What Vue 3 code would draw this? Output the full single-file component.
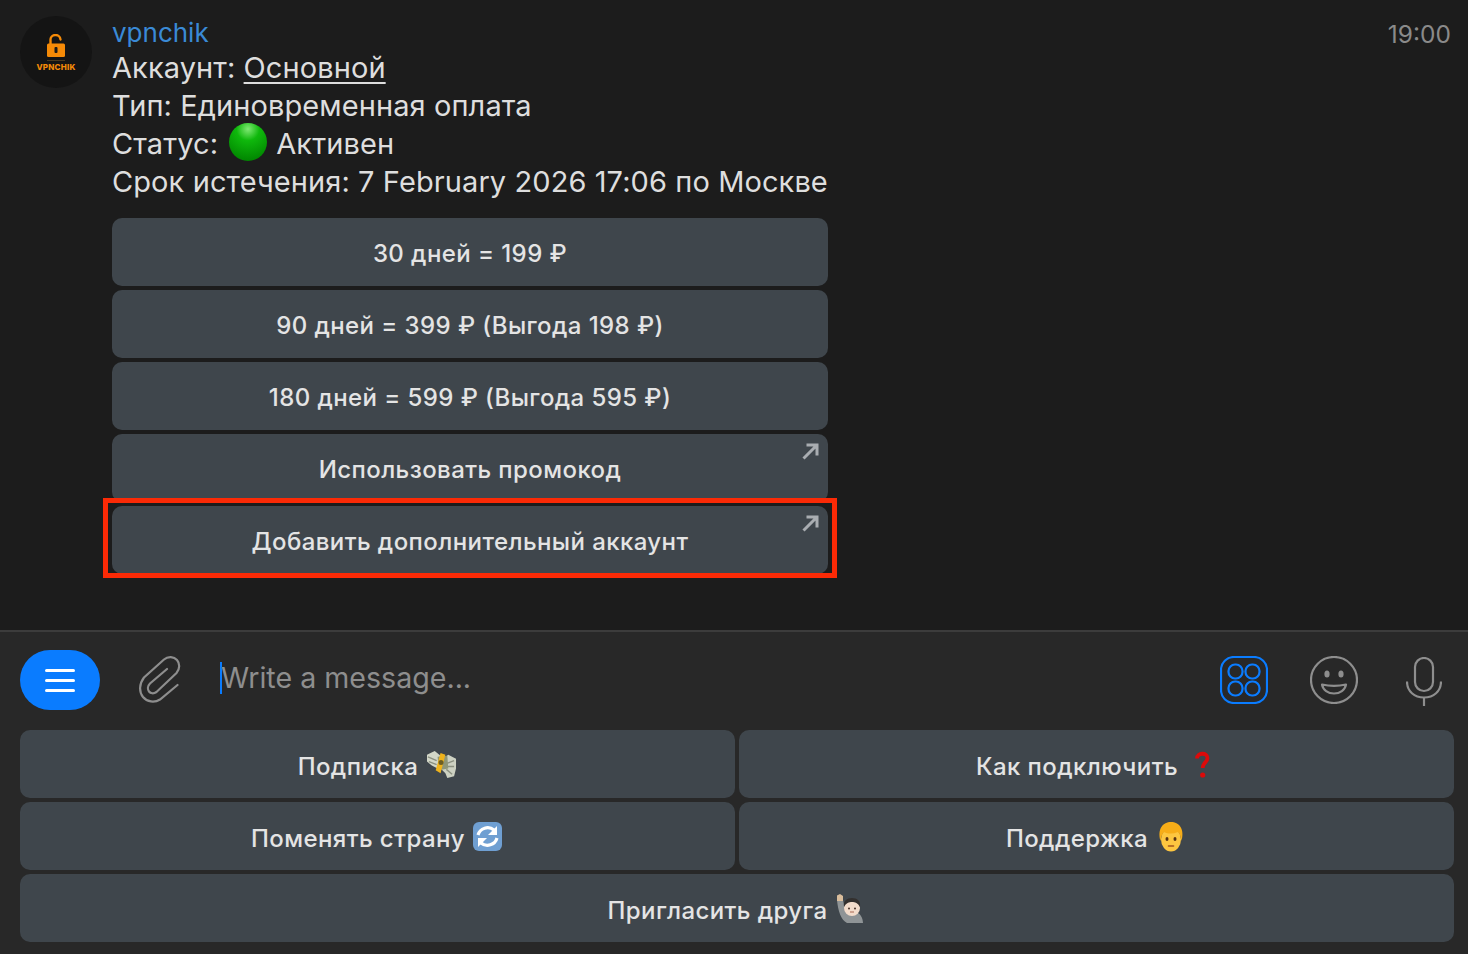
<script setup>
const payButtons = [
  { text: '30 дней = 199 ₽' },
  { text: '90 дней = 399 ₽ (Выгода 198 ₽)' },
  { text: '180 дней = 599 ₽ (Выгода 595 ₽)' },
  { text: 'Использовать промокод', link: true },
  { text: 'Добавить дополнительный аккаунт', link: true, marked: true },
]
</script>

<template>
  <div class="app">
    <section class="chat">
      <div class="avatar">
        <svg width="24" height="26" viewBox="0 0 24 26" class="lock">
          <path d="M6.500 11V6.500a5 5 0 0 1 10 -1" fill="none" stroke="#f58a07" stroke-width="2.400" stroke-linecap="round"/>
          <rect x="3" y="9.500" width="18" height="13.500" rx="1.500" fill="#f58a07"/>
          <rect x="10.500" y="13" width="3" height="6" rx="1" fill="#1a1a1a"/>
        </svg>
        <span class="since"></span>
        <span class="brand">VPNCHIK</span>
      </div>
      <div class="message">
        <div class="name">vpnchik</div>
        <div class="line">Аккаунт: <span class="under">Основной</span></div>
        <div class="line">Тип: Единовременная оплата</div>
        <div class="line status">Статус:
          <svg class="dot" width="38" height="38" viewBox="0 0 38 38">
            <defs>
              <radialGradient id="gd" cx="50%" cy="16%" r="84%">
                <stop offset="0" stop-color="#7fe873"/>
                <stop offset=".36" stop-color="#0fb80c"/>
                <stop offset="1" stop-color="#008500"/>
              </radialGradient>
            </defs>
            <circle cx="19" cy="19" r="19" fill="url(#gd)"/>
          </svg>
          Активен</div>
        <div class="line">Срок истечения: 7 February 2026 17:06 по Москве</div>
        <div class="inline-kb">
          <div v-for="b in payButtons" :key="b.text" class="btn">
            {{ b.text }}
            <svg v-if="b.link" class="arrow" width="17" height="17" viewBox="0 0 17 17">
              <path d="M1.500 15.500 14.500 2.500M4.500 2H15V12.500" fill="none" stroke="#a9adb1" stroke-width="3"/>
            </svg>
            <span v-if="b.marked" class="mark"></span>
          </div>
        </div>
      </div>
      <div class="time">19:00</div>
    </section>

    <section class="compose">
      <div class="input-row">
        <div class="menu">
          <span></span><span></span><span></span>
        </div>
        <svg class="clip" width="42" height="48" viewBox="0 0 42 48">
          <path d="M38.500 29 21 43.500c-5.500 3.500-13 2.500-17-2.500S0 28 5 21.500L25 3.500c4-3.500 10-3 13 .5s3 9-.5 13L17.500 36c-3 2-6 1.500-7.500-.5S8.500 30 11 27.500L28 13" fill="none" stroke="#8e8e8e" stroke-width="2.200" stroke-linecap="round"/>
        </svg>
        <div class="field"><i class="caret"></i>Write a message...</div>
        <svg class="icon-apps" width="48" height="48" viewBox="0 0 48 48" fill="none" stroke="#0a7cff" stroke-width="2.200">
          <rect x="1" y="1" width="46" height="46" rx="13"/>
          <rect x="8.500" y="8.500" width="14" height="14" rx="6.500"/>
          <rect x="25.500" y="8.500" width="14" height="14" rx="6.500"/>
          <rect x="8.500" y="25.500" width="14" height="14" rx="6.500"/>
          <rect x="25.500" y="25.500" width="14" height="14" rx="6.500"/>
        </svg>
        <svg class="icon-smile" width="48" height="48" viewBox="0 0 48 48">
          <circle cx="24" cy="24" r="23" fill="none" stroke="#8e8e8e" stroke-width="2.200"/>
          <ellipse cx="17" cy="18" rx="2.600" ry="3.600" fill="#8e8e8e"/>
          <ellipse cx="31" cy="18" rx="2.600" ry="3.600" fill="#8e8e8e"/>
          <path d="M12 28.500c7 1.700 17 1.700 24 0-1 5.500-6 9-12 9s-11-3.500-12-9Z" fill="none" stroke="#8e8e8e" stroke-width="2.200" stroke-linejoin="round"/>
        </svg>
        <svg class="icon-mic" width="36" height="50" viewBox="0 0 36 50" fill="none" stroke="#8e8e8e" stroke-width="2.200">
          <rect x="9" y="1" width="18" height="33" rx="9"/>
          <path d="M1 24.500c0 10 7.500 16 17 16s17-6 17-16M18 40.500V49"/>
        </svg>
      </div>
      <div class="reply-kb">
        <div class="btn">Подписка
          <svg class="emo" width="31" height="30" viewBox="0 0 32 31">
            <path d="M1 5 9 1l6 5 3 10-6 3-6-3-5-4Z" fill="#d3d7c8"/>
            <path d="M31 9l-8-4-6 4-3 9 6 6 2 5 7-2 2-8Z" fill="#cdd1c2"/>
            <path d="M2 7l9 4M3 12l8 3M29 11l-8 3M29 17l-7 0M27 25l-6-5" stroke="#8b9080" stroke-width="1.400"/>
            <path d="M12 7 22 6l1 13-10 2Z" fill="#8e9678"/>
            <path d="M15 3 20 5 15 24 10 21Z" fill="#efb31c"/>
            <circle cx="15.500" cy="13" r="2.600" fill="#6e5f22"/>
          </svg>
        </div>
        <div class="btn">Как подключить
          <svg class="emo" width="31" height="30" viewBox="0 0 31 30">
            <path d="M11 8.500c0-6 10.500-6.500 10.500-.5 0 4.500-4.800 4.500-4.800 10" fill="none" stroke="#dc0a0a" stroke-width="3.800"/>
            <circle cx="16.700" cy="25" r="2.600" fill="#dc0a0a"/>
          </svg>
        </div>
        <div class="btn">Поменять страну
          <svg class="emo" width="31" height="30" viewBox="0 0 31 30">
            <rect width="29" height="29" rx="6" fill="#6f9fd2"/>
            <path d="M5 13a10 10 0 0 1 16-5" fill="none" stroke="#fff" stroke-width="3.200"/>
            <path d="M24 4v9h-9Z" fill="#fff"/>
            <path d="M24 16a10 10 0 0 1-16 5" fill="none" stroke="#fff" stroke-width="3.200"/>
            <path d="M5 25v-9h9Z" fill="#fff"/>
          </svg>
        </div>
        <div class="btn">Поддержка
          <svg class="emo" width="31" height="30" viewBox="-2 0 31 30">
            <ellipse cx="13" cy="17.500" rx="10" ry="12" fill="#fdc640"/>
            <path d="M2.500 19C-1 7 5 0 13 0s14 7 10.500 19c-.5-4-1.500-7-3.500-9-5 2-10 2-14 0-2 2-3 5-3.500 9Z" fill="#f7ad18"/>
            <ellipse cx="9" cy="17" rx="1.500" ry="2" fill="#5a3412"/>
            <ellipse cx="17" cy="17" rx="1.500" ry="2" fill="#5a3412"/>
            <path d="M10.500 24h5" stroke="#a3551c" stroke-width="1.600" stroke-linecap="round"/>
          </svg>
        </div>
        <div class="btn wide">Пригласить друга
          <svg class="emo" width="31" height="30" viewBox="0 0 31 30">
            <path d="M1 6h6l1 5c1 3 2 5 4 7h8c4 1 7 6 7 11H11C5 26 2 17 1 6Z" fill="#8f9496"/>
            <path d="M1 1.500 4 0l3 2v5H1Z" fill="#d9bd9c"/>
            <circle cx="16" cy="14" r="8" fill="#f3dccb"/>
            <path d="M8 13c-1-6 3-9 8-9s9 3 8 9c-2-4-5-5-8-5s-6 1-8 5Z" fill="#33302e"/>
            <circle cx="13" cy="14.500" r="1" fill="#4a3328"/>
            <circle cx="19" cy="14.500" r="1" fill="#4a3328"/>
            <path d="M14 18h4" stroke="#b57a66" stroke-width="1.200"/>
          </svg>
        </div>
      </div>
    </section>
  </div>
</template>

<style scoped>
.app {
  width: 1468px;
  height: 954px;
  display: flex;
  flex-direction: column;
  overflow: hidden;
  font-family: Inter, "Noto Sans", "Liberation Sans", sans-serif;
  background: #1c1c1c;
}
.chat {
  height: 630px;
  box-sizing: border-box;
  padding: 16px 17px 0 20px;
  display: flex;
  align-items: flex-start;
  background: #1c1c1c;
}
.avatar {
  width: 72px;
  height: 72px;
  flex: none;
  border-radius: 50%;
  background: #141414;
  display: flex;
  flex-direction: column;
  align-items: center;
  padding-top: 18px;
  box-sizing: border-box;
}
.lock { display: block; }
.since {
  width: 18px;
  height: 1px;
  background: #4a3a20;
  margin: 0 0 2px;
}
.brand {
  color: #f58a07;
  font-size: 8px;
  font-weight: 800;
  line-height: 9px;
  letter-spacing: .2px;
}
.message {
  width: 716px;
  margin-left: 20px;
  color: #dedede;
  font-size: 29px;
  line-height: 38px;
  letter-spacing: .09px;
}
.name {
  color: #3a8ad6;
  font-size: 26px;
  line-height: 33px;
  letter-spacing: 0;
}
.line { white-space: nowrap; }
.under {
  text-decoration: underline;
  text-decoration-thickness: 2px;
  text-underline-offset: 4px;
}
.status { display: flex; align-items: center; gap: 10px; height: 38px; }
.dot { flex: none; margin: 0 -1px 4px 1px; }
.inline-kb {
  margin-top: 17px;
  display: flex;
  flex-direction: column;
  gap: 4px;
}
.btn {
  position: relative;
  height: 68px;
  box-sizing: border-box;
  padding-top: 4px;
  border-radius: 10px;
  background: #3f464c;
  color: #e4e4e4;
  font-size: 24px;
  font-weight: 500;
  display: flex;
  align-items: center;
  justify-content: center;
  white-space: nowrap;
  gap: 8px;
  letter-spacing: .42px;
}
.arrow { position: absolute; top: 9px; right: 9px; }
.mark {
  position: absolute;
  left: -9px;
  right: -9px;
  top: -8px;
  bottom: -4px;
  border: 5px solid #fb2a06;
  pointer-events: none;
}
.time {
  margin-left: auto;
  color: #8a8a8a;
  font-size: 24.500px;
  line-height: 37px;
}
.compose {
  flex: 1;
  background: #282828;
  border-top: 2px solid #3c3c3c;
  padding: 18px 14px 0 20px;
  box-sizing: border-box;
}
.input-row {
  height: 60px;
  padding-right: 12px;
  display: flex;
  align-items: center;
}
.menu {
  width: 80px;
  height: 60px;
  flex: none;
  border-radius: 30px;
  background: #0a7cff;
  display: flex;
  flex-direction: column;
  align-items: center;
  justify-content: center;
  gap: 7px;
}
.menu span {
  width: 30px;
  height: 3px;
  border-radius: 2px;
  background: #fff;
}
.clip { flex: none; margin-left: 39px; }
.field {
  flex: 1;
  margin-left: 39px;
  margin-bottom: 4px;
  color: #8e8e8e;
  font-size: 28.600px;
  line-height: 36px;
  display: flex;
  align-items: center;
}
.caret {
  width: 2px;
  height: 32px;
  background: #0a7cff;
  margin-right: -1px;
}
.icon-apps { flex: none; }
.icon-smile { flex: none; margin-left: 42px; }
.icon-mic { flex: none; margin-left: 48px; margin-top: 4px; }
.reply-kb {
  margin-top: 20px;
  display: grid;
  grid-template-columns: 1fr 1fr;
  gap: 4px;
}
.wide { grid-column: 1 / 3; }
.emo { flex: none; margin-bottom: 2px; }
</style>

<style>
html, body { background: #1c1c1c; }
</style>
